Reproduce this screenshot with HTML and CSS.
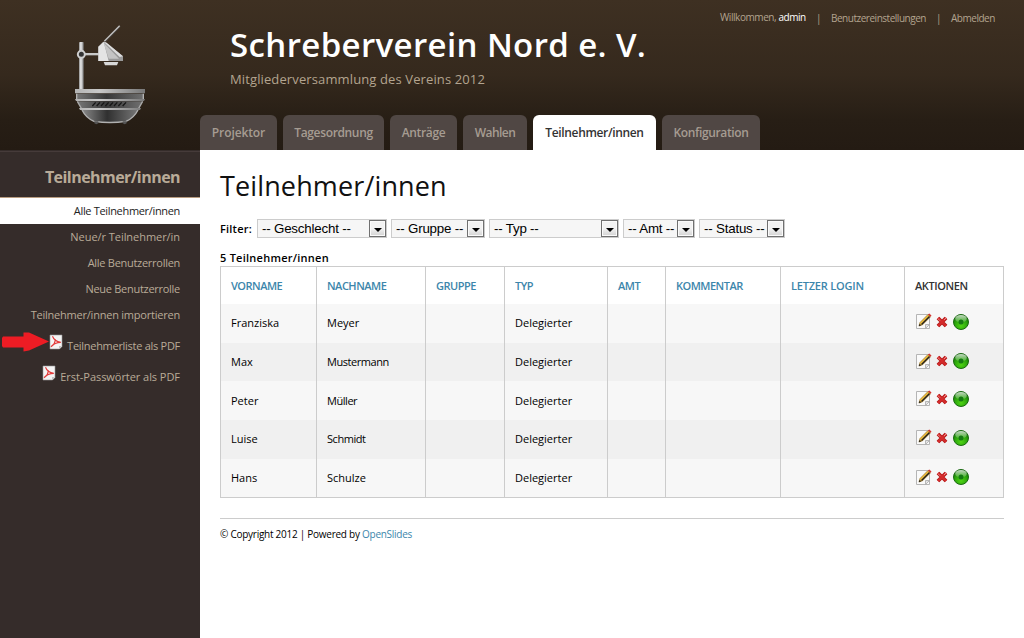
FILE: index.html
```html
<!DOCTYPE html>
<html lang="de">
<head>
<meta charset="utf-8">
<title>Teilnehmer/innen</title>
<link rel="stylesheet" href="styles.css">
</head>
<body>
<svg width="0" height="0" class="defs" aria-hidden="true">
  <defs>
    <linearGradient id="metal" x1="0" x2="1"><stop offset="0" stop-color="#8a8a8a"/><stop offset=".4" stop-color="#eee"/><stop offset="1" stop-color="#777"/></linearGradient>
    <linearGradient id="bar" x1="0" x2="1"><stop offset="0" stop-color="#b4b4b4"/><stop offset=".35" stop-color="#c8c8c8"/><stop offset="1" stop-color="#777"/></linearGradient>
    <linearGradient id="bowl" x1="0" x2="1"><stop offset="0" stop-color="#777"/><stop offset=".45" stop-color="#383838"/><stop offset="1" stop-color="#707070"/></linearGradient>
    <linearGradient id="bowl2" x1="0" x2="1"><stop offset="0" stop-color="#8a8a8a"/><stop offset=".45" stop-color="#303030"/><stop offset="1" stop-color="#777"/></linearGradient>
    <radialGradient id="green" cx=".5" cy=".75" r=".7"><stop offset="0" stop-color="#4fd414"/><stop offset=".6" stop-color="#2ba50c"/><stop offset="1" stop-color="#14700a"/></radialGradient>
    <linearGradient id="shine" x1="0" y1="0" x2="0" y2="1"><stop offset="0" stop-color="#fff" stop-opacity=".75"/><stop offset="1" stop-color="#fff" stop-opacity=".1"/></linearGradient>
  </defs>
  <symbol id="edit" viewBox="0 0 16 17">
    <path d="M.5 1.500h13v14H.5z" fill="#fafafa" stroke="#b5b5b5"/>
    <path d="M9.500 15.500v-4h4z" fill="#e4e4e4" stroke="#aaa" stroke-width=".8"/>
    <path d="M3 13l1-3.500 8-8 2.500 2.300-8 8z" fill="#f0bf3c" stroke="#8a6216" stroke-width=".6"/>
    <path d="M5.500 11.500l8-8" stroke="#222" stroke-width="1.500"/>
    <path d="M12 1.600l1.300-1.200 2.200 2-1.100 1.400z" fill="#d43232"/>
    <path d="M2.700 13.300l1-2.500 1.500 1.500z" fill="#222"/>
  </symbol>
  <symbol id="delete" viewBox="0 0 12 12">
    <path d="M2 2l8 8M10 2L2 10" stroke="#b01818" stroke-width="3.800"/>
    <path d="M2 2l8 8M10 2L2 10" stroke="#d42c2c" stroke-width="2.400"/>
    <path d="M1.500 2.200l2.500 2.500M8 4l2.200-2.200" stroke="#ee8a8a"/>
  </symbol>
  <symbol id="status" viewBox="0 0 16 16">
    <circle cx="8" cy="8" r="7.500" fill="url(#green)" stroke="#1b6a12"/>
    <ellipse cx="8" cy="4.800" rx="5.800" ry="3.800" fill="url(#shine)"/>
    <circle cx="8" cy="8" r="2.500" fill="#167a14"/>
  </symbol>
  <symbol id="pdf" viewBox="0 0 14 16">
    <path d="M1 1h12v11.500L10.500 15H1z" fill="#f4f4f4" stroke="#999" stroke-width=".6"/>
    <path d="M10 15v-3h3z" fill="#c4c4c4"/>
    <path d="M3.500 2.200C4.500 5 7 7.500 11.800 8.400 8 8.500 4.500 10 2 12.700 4.500 11.500 6.200 8.500 6.200 5" fill="none" stroke="#e23a3a" stroke-width="1.100"/>
  </symbol>
</svg>

<header class="header">
  <div class="logo">
    <svg width="100" height="120" viewBox="0 0 300 360">
      <path d="M133 79l46-47" stroke="#c4c4c4" stroke-width="4"/>
      <path d="M135 82l46-47" stroke="#555" stroke-width="2"/>
      <rect x="57" y="81" width="14" height="142" rx="2" fill="url(#metal)"/>
      <rect x="74" y="114" width="43" height="7" fill="#c8c8c8"/>
      <circle cx="64" cy="118" r="10.500" fill="#333" stroke="#cfcfcf" stroke-width="6"/>
      <path d="M115 95l14-14q5-2 10 2l50 41v14h-74z" fill="#999"/>
      <path d="M115 95l16-15 15 58h-31z" fill="#e4e4e4"/>
      <path d="M131 80l9 3 49 41-10 2z" fill="#ddd"/>
      <path d="M131 83l46 48h-31z" fill="#c4c4c4"/>
      <path d="M131 141h44l-4 10h-36z" fill="#d8d8d8"/>
      <path d="M48 236h204v17H48z" fill="url(#bowl)"/>
      <path d="M50 236v17M250 236v17" stroke="#b4b4b4" stroke-width="4"/>
      <path d="M52 259h196l-12 21H64z" fill="url(#bowl)"/>
      <path d="M52 259l12 21M248 259l-12 21" stroke="#aaa" stroke-width="4"/>
      <path d="M66 285h168q-12 24-36 34-48 7-96 0-24-10-36-34z" fill="url(#bowl2)"/>
      <path d="M66 285q12 24 36 34 48 7 96 0 24-10 36-34" fill="none" stroke="#b0b0b0" stroke-width="4"/>
      <path d="M45 222h210v13H45z" fill="url(#bar)"/>
      <path d="M45 252h210l-3 6H48zM57 279h186l-3 6H60z" fill="url(#bar)"/>
      <path d="M97 273l12-11m1 11l12-11m1 11l12-11m1 11l12-11m1 11l12-11m1 11l12-11m1 11l12-11m1 11l12-11" transform="translate(-26 0)" visibility="hidden"/>
      <path d="M97 273l10-11m3 11l10-11m3 11l10-11m3 11l10-11m3 11l10-11m3 11l10-11m3 11l10-11m3 11l10-11" stroke="#161616" stroke-width="4"/>
      <path d="M103 319h12v6l-6 3-6-3zM188 319h12v6l-6 3-6-3z" fill="#555"/>
    </svg>
  </div>
  <div class="head-main">
    <div class="user-nav">
      <span class="welcome">Willkommen, <b>admin</b></span><i>|</i><a class="settings">Benutzereinstellungen</a><i>|</i><a class="logout">Abmelden</a>
    </div>
    <div class="site-title"><span>Schreberverein Nord e. V.</span></div>
    <div class="site-sub"><span>Mitgliederversammlung des Vereins 2012</span></div>
    <nav class="tabs">
      <a class="t1">Projektor</a><a class="t2">Tagesordnung</a><a class="t3">Anträge</a><a class="t4">Wahlen</a><a class="t5 active">Teilnehmer/innen</a><a class="t6">Konfiguration</a>
    </nav>
  </div>
</header>

<div class="body">
  <aside class="sidebar">
    <h2>Teilnehmer/innen</h2>
    <a class="active">Alle Teilnehmer/innen</a>
    <a class="wide">Neue/r Teilnehmer/in</a>
    <a>Alle Benutzerrollen</a>
    <a>Neue Benutzerrolle</a>
    <a class="import">Teilnehmer/innen importieren</a>
    <a class="pdf"><svg width="14" height="16"><use href="#pdf"/></svg><span>Teilnehmerliste als PDF</span>
      <svg class="arrow" width="48" height="20" viewBox="0 0 48 20"><path d="M1 4.500h20.500V.5H27L47 9.500 27 18.500l-5.500 1V15.500H1L0 14V6z" fill="#ed1c24"/></svg></a>
    <a class="pdf wide"><svg width="14" height="16"><use href="#pdf"/></svg><span>Erst-Passwörter als PDF</span></a>
  </aside>
  <main class="content">
    <h1>Teilnehmer/innen</h1>
    <div class="filters">
      <span class="label">Filter:</span>
      <div class="select s1"><span>-- Geschlecht --</span><b></b></div>
      <div class="select s2"><span>-- Gruppe --</span><b></b></div>
      <div class="select s3"><span>-- Typ --</span><b></b></div>
      <div class="select s4"><span>-- Amt --</span><b></b></div>
      <div class="select s5"><span>-- Status --</span><b></b></div>
    </div>
    <div class="count">5 Teilnehmer/innen</div>
    <table>
      <colgroup><col class="c1"><col class="c2"><col class="c3"><col class="c4"><col class="c5"><col class="c6"><col class="c7"><col class="c8"></colgroup>
      <thead><tr><th>VORNAME</th><th>NACHNAME</th><th>GRUPPE</th><th>TYP</th><th>AMT</th><th>KOMMENTAR</th><th class="login">LETZER LOGIN</th><th class="plain">AKTIONEN</th></tr></thead>
      <tbody>
        <tr><td>Franziska</td><td>Meyer</td><td></td><td>Delegierter</td><td></td><td></td><td></td><td><div class="actions"><svg width="16" height="17"><use href="#edit"/></svg><svg width="12" height="12"><use href="#delete"/></svg><svg width="16" height="16"><use href="#status"/></svg></div></td></tr>
        <tr><td>Max</td><td class="tight">Mustermann</td><td></td><td>Delegierter</td><td></td><td></td><td></td><td><div class="actions"><svg width="16" height="17"><use href="#edit"/></svg><svg width="12" height="12"><use href="#delete"/></svg><svg width="16" height="16"><use href="#status"/></svg></div></td></tr>
        <tr><td>Peter</td><td class="tight">Müller</td><td></td><td>Delegierter</td><td></td><td></td><td></td><td><div class="actions"><svg width="16" height="17"><use href="#edit"/></svg><svg width="12" height="12"><use href="#delete"/></svg><svg width="16" height="16"><use href="#status"/></svg></div></td></tr>
        <tr><td>Luise</td><td class="tight">Schmidt</td><td></td><td>Delegierter</td><td></td><td></td><td></td><td><div class="actions"><svg width="16" height="17"><use href="#edit"/></svg><svg width="12" height="12"><use href="#delete"/></svg><svg width="16" height="16"><use href="#status"/></svg></div></td></tr>
        <tr><td>Hans</td><td>Schulze</td><td></td><td>Delegierter</td><td></td><td></td><td></td><td><div class="actions"><svg width="16" height="17"><use href="#edit"/></svg><svg width="12" height="12"><use href="#delete"/></svg><svg width="16" height="16"><use href="#status"/></svg></div></td></tr>
      </tbody>
    </table>
    <footer>© Copyright 2012 | Powered by <a>OpenSlides</a></footer>
  </main>
</div>
</body>
</html>
```
FILE: styles.css
```css
* { box-sizing: border-box; }
body {
  margin: 0;
  height: 638px;
  overflow: hidden;
  display: flex;
  flex-direction: column;
  background: #fff;
  color: #000;
  font-family: "Trebuchet MS", "Open Sans", sans-serif;
  font-size: 11px;
  white-space: nowrap;
}
.defs { position: absolute; }
.header {
  height: 150px;
  display: flex;
  background: linear-gradient(#3e3022, #35291d 50%, #271e15 80%, #241b13);
}
.logo { width: 200px; padding: 15px 0 0 60px; }
.head-main { flex: 1; display: flex; flex-direction: column; }
.user-nav {
  height: 27px;
  padding: 9px 30px 0 0;
  display: flex;
  justify-content: flex-end;
  line-height: 18px;
  font-size: 10px;
  letter-spacing: -0.48px;
  color: #b3a48f;
}
.user-nav .welcome { width: 86px; margin-top: -1px; letter-spacing: -0.43px; }
.user-nav .settings { width: 95px; }
.user-nav .logout { width: 43px; }
.user-nav b { font-weight: 400; color: #fff; }
.user-nav i { width: 25px; text-align: center; font-style: normal; }
.site-title {
  height: 38px;
  padding-left: 30px;
  line-height: 36px;
  font-size: 33px;
  font-weight: 600;
  letter-spacing: 0.38px;
  color: #fff;
}
.site-sub {
  height: 50px;
  padding-left: 30px;
  line-height: 28px;
  font-size: 13px;
  letter-spacing: 0.12px;
  color: #b3a48f;
}
.tabs { display: flex; gap: 6px; }
.tabs a {
  height: 35px;
  line-height: 35px;
  text-align: center;
  font-size: 12px;
  font-weight: 600;
  letter-spacing: -0.35px;
  color: #a69c92;
  background: #504744;
  border-radius: 6px 6px 0 0;
}
.tabs .active { background: #fff; color: #333; }
.tabs .t1 { width: 77px; letter-spacing: -0.1px; }
.t2 { width: 101px; }
.t3 { width: 67px; }
.tabs .t4 { width: 64px; letter-spacing: -0.55px; }
.t5 { width: 123px; }
.t6 { width: 98px; }

.body { flex: 1; display: flex; }
.sidebar {
  width: 200px;
  background: linear-gradient(#352c2a 1px, #463b3a 1px, #463b3a 2px, #352c2a 2px);
  text-align: right;
  letter-spacing: -0.28px;
  color: #b9ab98;
}
.sidebar h2 {
  margin: 0;
  height: 48px;
  padding: 7px 20px 0 0;
  border-bottom: 1px solid #b89c80;
  line-height: 40px;
  font-size: 16px;
  font-weight: 700;
  letter-spacing: -0.55px;
}
.sidebar a { display: block; height: 26px; line-height: 26px; padding-right: 20px; }
.sidebar .active { background: #fff; color: #222; letter-spacing: -0.33px; }
.sidebar .wide { letter-spacing: -0.05px; }
.sidebar .import { letter-spacing: -0.22px; }
.sidebar .pdf {
  position: relative;
  height: 31px;
  line-height: 36px;
  display: flex;
  justify-content: flex-end;
  gap: 4px;
}
.sidebar .pdf svg { margin-top: 6px; }
.sidebar .pdf .arrow { position: absolute; left: 2px; top: 4px; margin: 0; }

.content { flex: 1; padding: 0 20px; }
h1 { margin: 0; height: 69px; line-height: 72px; font-size: 27px; font-weight: 400; letter-spacing: 0.13px; color: #111; }
.filters { display: flex; gap: 4px; height: 19px; line-height: 19px; }
.label { width: 33px; font-weight: 600; letter-spacing: 0.2px; }
.select {
  display: flex;
  border: 1px solid #ccc;
  background: #f6f6f6;
  font: 13.33px/17px "Liberation Sans", sans-serif;
  letter-spacing: -0.2px;
  padding-left: 4px;
}
.select b {
  margin-left: auto;
  width: 17px;
  height: 17px;
  border: 1px solid #707070;
  box-shadow: inset 0 0 0 1px #fafafa;
  background: linear-gradient(#f2f2f2 50%, #d2d2d2);
  display: flex;
  align-items: center;
  justify-content: center;
}
.select b::after { content: ""; border: 4px solid transparent; border-top-color: #000; border-bottom: 0; margin-top: 2px; }
.s1 { width: 130px; }
.s2 { width: 94px; }
.s3 { width: 130px; }
.s4 { width: 72px; }
.s5 { width: 86px; }
.count { height: 28px; padding-top: 11px; line-height: 17px; font-weight: 600; letter-spacing: 0.25px; }
table { width: 784px; table-layout: fixed; border-collapse: separate; border-spacing: 0; border: 1px solid #ccc; }
.c1 { width: 96px; }
.c2 { width: 109px; }
.c3 { width: 79px; }
.c4 { width: 103px; }
.c5 { width: 58px; }
.c6 { width: 115px; }
.c7 { width: 124px; }
.c8 { width: 98px; }
th, td { padding: 0 0 0 10px; text-align: left; vertical-align: middle; line-height: 16px; }
th:not(:last-child), td:not(:last-child) { border-right: 1px solid #ccc; }
th { height: 37px; font-weight: 600; letter-spacing: -0.5px; color: #3c86ab; }
th.login { letter-spacing: -0.2px; }
th.plain { color: #333; letter-spacing: -0.4px; }
td { height: 39px; }
td.tight { letter-spacing: -0.45px; }
tr:nth-child(2) td, tr:nth-child(5) td { height: 38px; }
tbody tr:nth-child(1) td, tbody tr:nth-child(4) td { padding-bottom: 2px; }
tbody tr:nth-child(odd) { background: #f7f7f7; }
tbody tr:nth-child(even) { background: #f0f0f0; }
.actions { display: flex; align-items: center; gap: 4px; padding: 0 0 2px 1px; }
.actions svg:last-child { margin-left: 1px; }
tr:nth-child(3) .actions { padding-bottom: 4px; }
footer { margin-top: 20px; border-top: 1px solid #ccc; line-height: 30px; font-size: 10px; letter-spacing: -0.26px; }
footer a { color: #3c86ab; }
```
